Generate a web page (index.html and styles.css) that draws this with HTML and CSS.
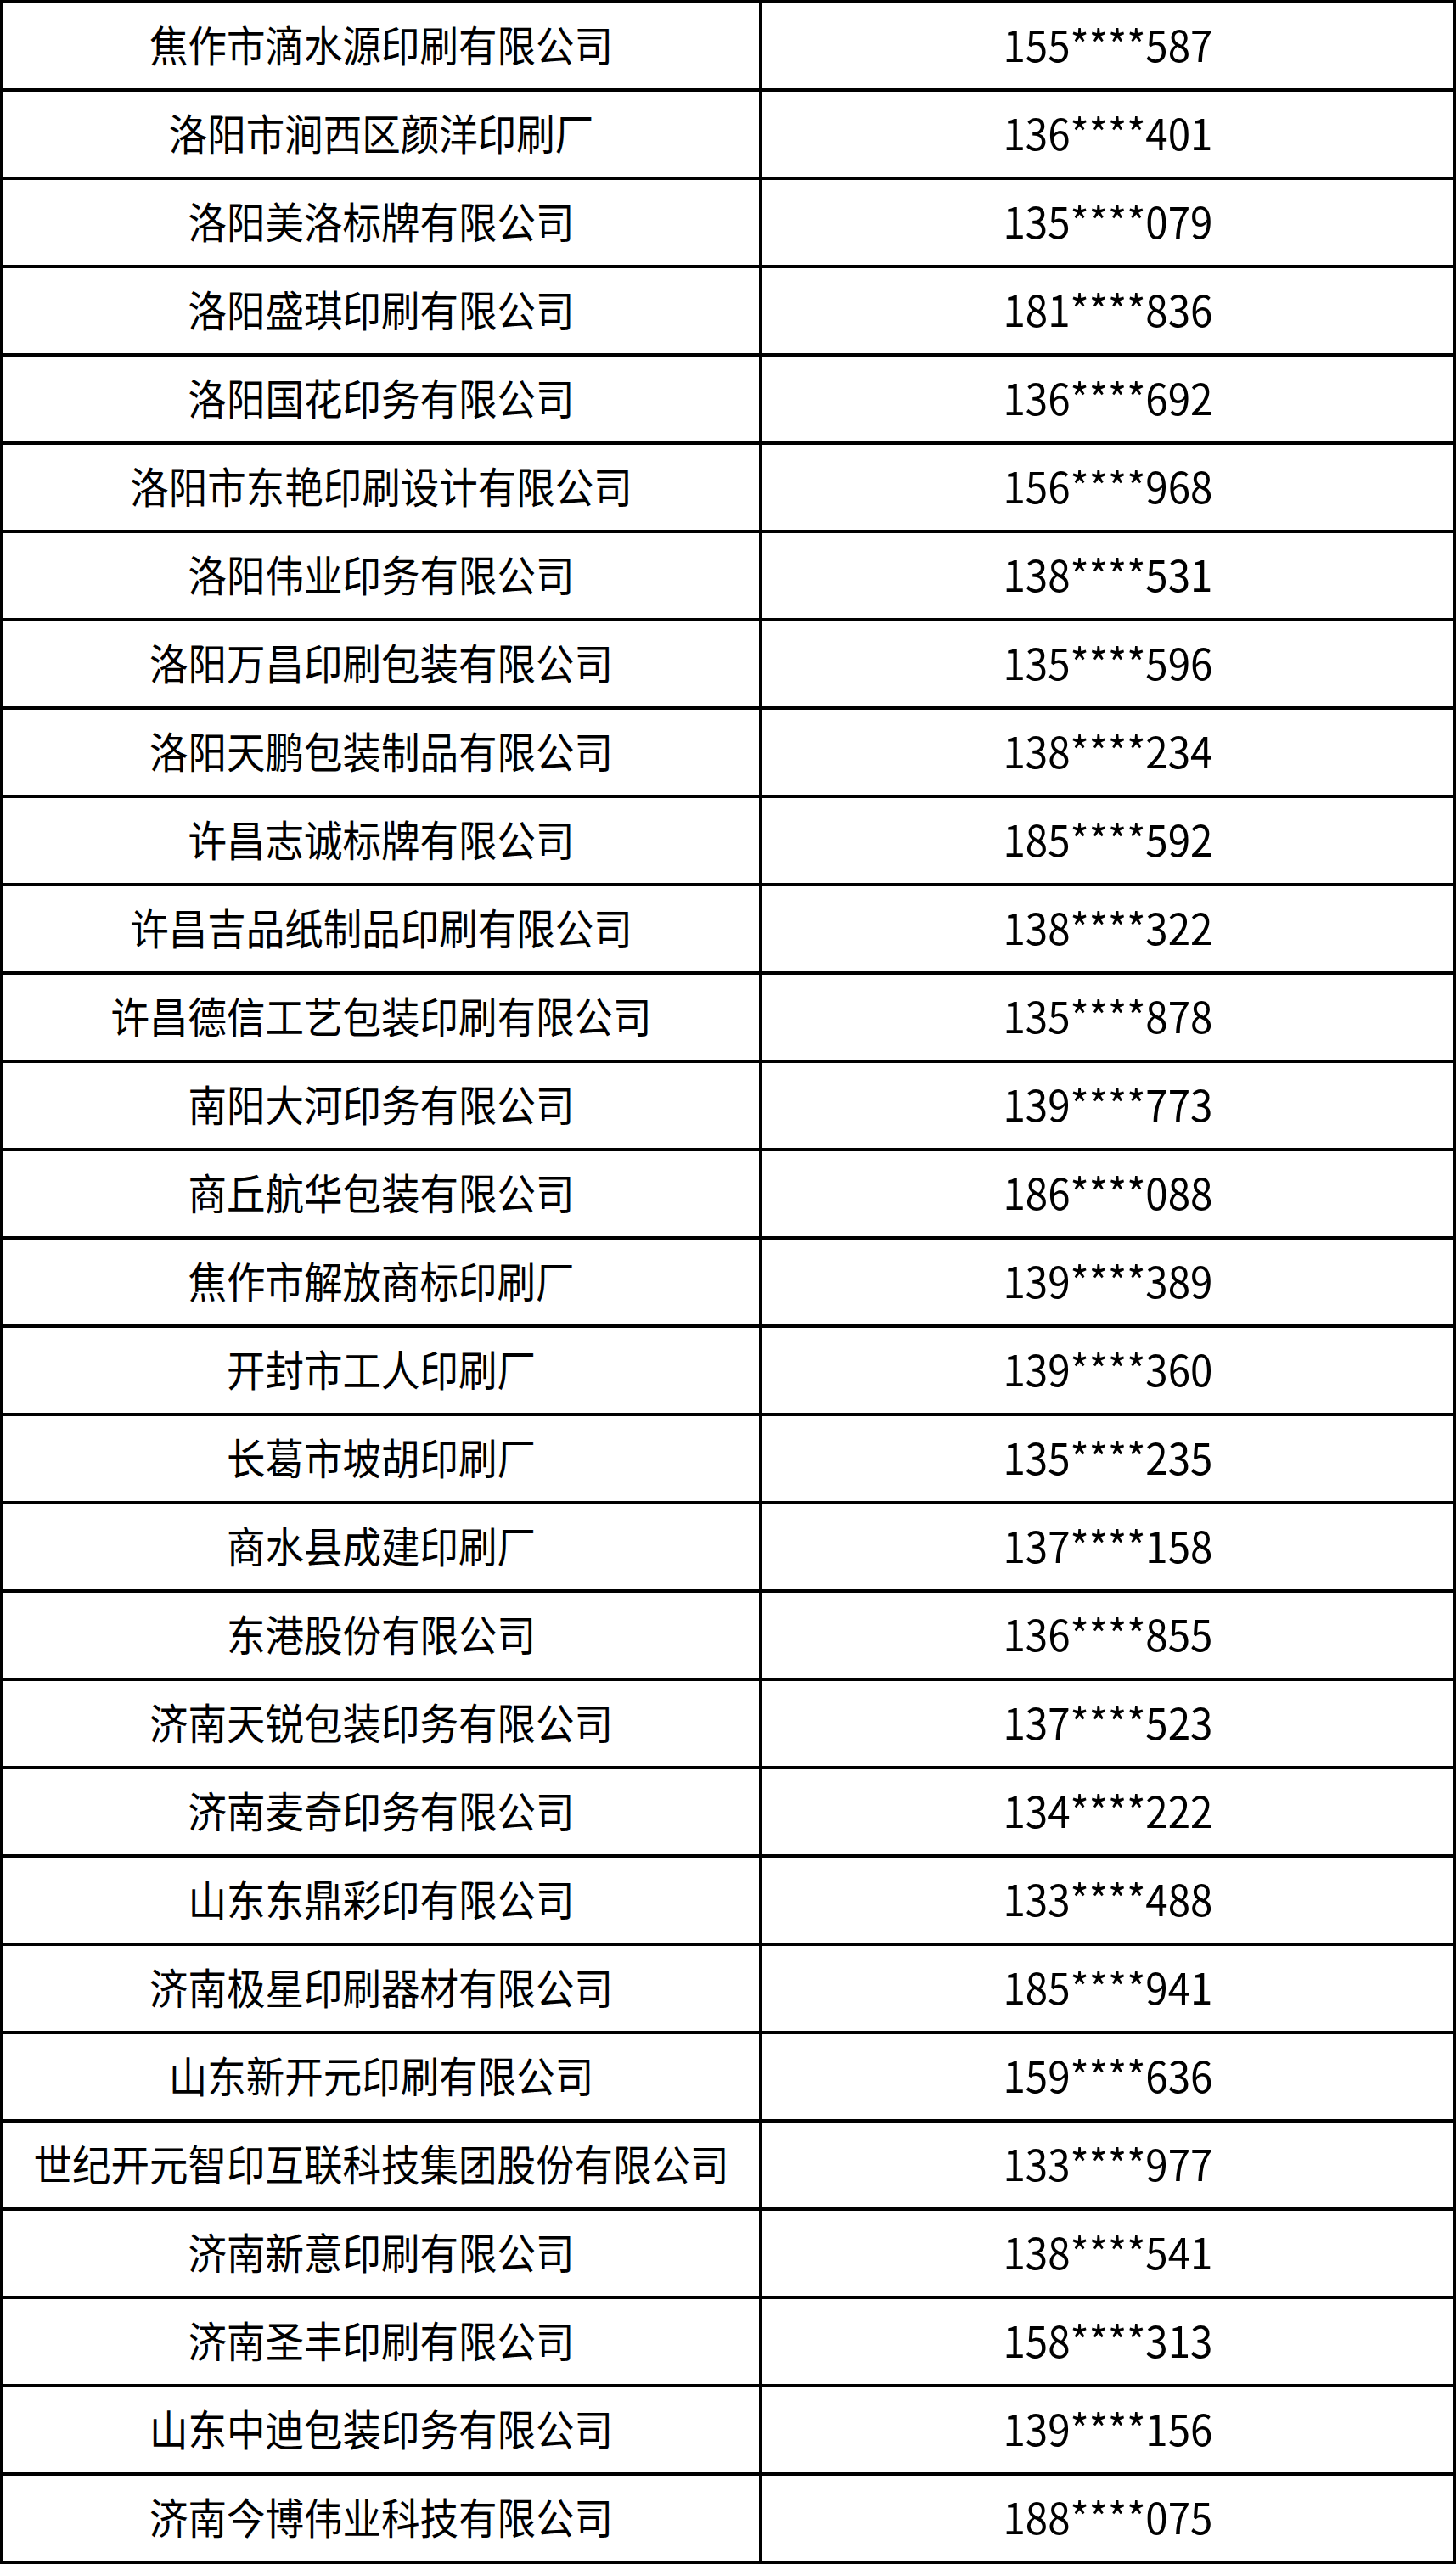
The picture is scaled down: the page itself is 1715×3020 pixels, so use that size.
FILE: index.html
```
<!DOCTYPE html>
<html lang="zh-CN">
<head>
<meta charset="utf-8">
<title>名单</title>
<link rel="stylesheet" href="styles.css">
</head>
<body>
<div class="table">
  <div class="cell"><span class="t">焦作市滴水源印刷有限公司</span></div><div class="cell"><span class="t num">155****587</span></div>
  <div class="cell"><span class="t">洛阳市涧西区颜洋印刷厂</span></div><div class="cell"><span class="t num">136****401</span></div>
  <div class="cell"><span class="t">洛阳美洛标牌有限公司</span></div><div class="cell"><span class="t num">135****079</span></div>
  <div class="cell"><span class="t">洛阳盛琪印刷有限公司</span></div><div class="cell"><span class="t num">181****836</span></div>
  <div class="cell"><span class="t">洛阳国花印务有限公司</span></div><div class="cell"><span class="t num">136****692</span></div>
  <div class="cell"><span class="t">洛阳市东艳印刷设计有限公司</span></div><div class="cell"><span class="t num">156****968</span></div>
  <div class="cell"><span class="t">洛阳伟业印务有限公司</span></div><div class="cell"><span class="t num">138****531</span></div>
  <div class="cell"><span class="t">洛阳万昌印刷包装有限公司</span></div><div class="cell"><span class="t num">135****596</span></div>
  <div class="cell"><span class="t">洛阳天鹏包装制品有限公司</span></div><div class="cell"><span class="t num">138****234</span></div>
  <div class="cell"><span class="t">许昌志诚标牌有限公司</span></div><div class="cell"><span class="t num">185****592</span></div>
  <div class="cell"><span class="t">许昌吉品纸制品印刷有限公司</span></div><div class="cell"><span class="t num">138****322</span></div>
  <div class="cell"><span class="t">许昌德信工艺包装印刷有限公司</span></div><div class="cell"><span class="t num">135****878</span></div>
  <div class="cell"><span class="t">南阳大河印务有限公司</span></div><div class="cell"><span class="t num">139****773</span></div>
  <div class="cell"><span class="t">商丘航华包装有限公司</span></div><div class="cell"><span class="t num">186****088</span></div>
  <div class="cell"><span class="t">焦作市解放商标印刷厂</span></div><div class="cell"><span class="t num">139****389</span></div>
  <div class="cell"><span class="t">开封市工人印刷厂</span></div><div class="cell"><span class="t num">139****360</span></div>
  <div class="cell"><span class="t">长葛市坡胡印刷厂</span></div><div class="cell"><span class="t num">135****235</span></div>
  <div class="cell"><span class="t">商水县成建印刷厂</span></div><div class="cell"><span class="t num">137****158</span></div>
  <div class="cell"><span class="t">东港股份有限公司</span></div><div class="cell"><span class="t num">136****855</span></div>
  <div class="cell"><span class="t">济南天锐包装印务有限公司</span></div><div class="cell"><span class="t num">137****523</span></div>
  <div class="cell"><span class="t">济南麦奇印务有限公司</span></div><div class="cell"><span class="t num">134****222</span></div>
  <div class="cell"><span class="t">山东东鼎彩印有限公司</span></div><div class="cell"><span class="t num">133****488</span></div>
  <div class="cell"><span class="t">济南极星印刷器材有限公司</span></div><div class="cell"><span class="t num">185****941</span></div>
  <div class="cell"><span class="t">山东新开元印刷有限公司</span></div><div class="cell"><span class="t num">159****636</span></div>
  <div class="cell"><span class="t">世纪开元智印互联科技集团股份有限公司</span></div><div class="cell"><span class="t num">133****977</span></div>
  <div class="cell"><span class="t">济南新意印刷有限公司</span></div><div class="cell"><span class="t num">138****541</span></div>
  <div class="cell"><span class="t">济南圣丰印刷有限公司</span></div><div class="cell"><span class="t num">158****313</span></div>
  <div class="cell"><span class="t">山东中迪包装印务有限公司</span></div><div class="cell"><span class="t num">139****156</span></div>
  <div class="cell"><span class="t">济南今博伟业科技有限公司</span></div><div class="cell"><span class="t num">188****075</span></div>
</div>
</body>
</html>
```
FILE: styles.css
```
html, body {
  margin: 0;
  padding: 0;
  background: #fff;
}
.table {
  width: 1715px;
  box-sizing: border-box;
  display: grid;
  grid-template-columns: 890px 813px;
  grid-auto-rows: 100px;
  gap: 4px;
  padding: 4px;
  background: #000;
}
.cell {
  background: #fff;
  display: flex;
  align-items: center;
  justify-content: center;
  overflow: hidden;
  padding-bottom: 6px;
  box-sizing: border-box;
}
.t {
  display: inline-block;
  font-family: "Noto Sans CJK SC", "Noto Sans", sans-serif;
  font-size: 50px;
  line-height: 1;
  color: #000;
  white-space: nowrap;
  transform: scaleX(0.91);
}
.num {
  transform: scaleX(0.95);
}
```
